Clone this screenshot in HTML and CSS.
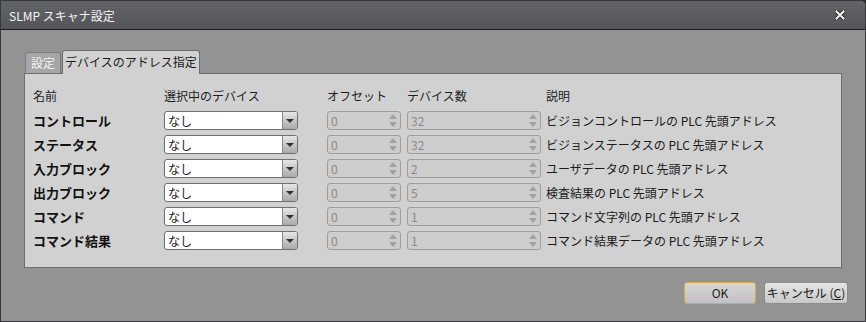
FILE: index.html
```html
<!DOCTYPE html>
<html lang="ja">
<head>
  <meta charset="UTF-8" />
  <title>SLMP スキャナ設定</title>
  <link rel="stylesheet" href="styles.css">
</head>
<body>
  <div class="window">
    <div class="titlebar">
      <span class="title">SLMP スキャナ設定</span>
      <svg class="close" width="10" height="10" viewBox="0 0 10 10">
        <path d="M1.5 1.5 L8.5 8.5 M8.5 1.5 L1.5 8.5" stroke="#2a2a2a" stroke-width="4" stroke-linecap="square"/>
        <path d="M1.5 1.5 L8.5 8.5 M8.5 1.5 L1.5 8.5" stroke="#f2f2f2" stroke-width="2" stroke-linecap="square"/>
      </svg>
    </div>

    <div class="dialog-body">
      <div class="tabs">
        <div class="tab">設定</div>
        <div class="tab active">デバイスのアドレス指定</div>
      </div>

      <div class="panel">
        <div class="grid">
          <div class="head">名前</div>
          <div class="head">選択中のデバイス</div>
          <div class="head">オフセット</div>
          <div class="head">デバイス数</div>
          <div class="head">説明</div>

          <div class="name">コントロール</div>
          <div><div class="combo"><span>なし</span><i class="drop"></i></div></div>
          <div><div class="spin small"><span>0</span><i class="arrows"></i></div></div>
          <div><div class="spin"><span>32</span><i class="arrows"></i></div></div>
          <div class="desc">ビジョンコントロールの PLC 先頭アドレス</div>

          <div class="name">ステータス</div>
          <div><div class="combo"><span>なし</span><i class="drop"></i></div></div>
          <div><div class="spin small"><span>0</span><i class="arrows"></i></div></div>
          <div><div class="spin"><span>32</span><i class="arrows"></i></div></div>
          <div class="desc">ビジョンステータスの PLC 先頭アドレス</div>

          <div class="name">入力ブロック</div>
          <div><div class="combo"><span>なし</span><i class="drop"></i></div></div>
          <div><div class="spin small"><span>0</span><i class="arrows"></i></div></div>
          <div><div class="spin"><span>2</span><i class="arrows"></i></div></div>
          <div class="desc">ユーザデータの PLC 先頭アドレス</div>

          <div class="name">出力ブロック</div>
          <div><div class="combo"><span>なし</span><i class="drop"></i></div></div>
          <div><div class="spin small"><span>0</span><i class="arrows"></i></div></div>
          <div><div class="spin"><span>5</span><i class="arrows"></i></div></div>
          <div class="desc">検査結果の PLC 先頭アドレス</div>

          <div class="name">コマンド</div>
          <div><div class="combo"><span>なし</span><i class="drop"></i></div></div>
          <div><div class="spin small"><span>0</span><i class="arrows"></i></div></div>
          <div><div class="spin"><span>1</span><i class="arrows"></i></div></div>
          <div class="desc">コマンド文字列の PLC 先頭アドレス</div>

          <div class="name">コマンド結果</div>
          <div><div class="combo"><span>なし</span><i class="drop"></i></div></div>
          <div><div class="spin small"><span>0</span><i class="arrows"></i></div></div>
          <div><div class="spin"><span>1</span><i class="arrows"></i></div></div>
          <div class="desc">コマンド結果データの PLC 先頭アドレス</div>
        </div>
      </div>

      <div class="footer">
        <button class="btn ok">OK</button>
        <button class="btn">キャンセル (<u>C</u>)</button>
      </div>
    </div>
  </div>
</body>
</html>
```

FILE: styles.css
```css
html, body {
  margin: 0;
  padding: 0;
  background: #2e2e30;
}

body {
  font-family: "Noto Sans CJK JP", "Noto Sans", sans-serif;
  font-size: 12px;
  color: #1a1a1a;
}

.window {
  width: 866px;
  height: 322px;
  box-sizing: border-box;
  border: 1px solid #38383c;
  border-top-right-radius: 6px;
  background: #939393;
  overflow: hidden;
  display: flex;
  flex-direction: column;
}

.titlebar {
  height: 28px;
  flex: none;
  background: linear-gradient(#626367, #55565a);
  border-bottom: 1px solid #1c1c1e;
  display: flex;
  align-items: center;
  justify-content: space-between;
  padding: 0 20px 0 8px;
}

.title {
  color: #f4f4f4;
  font-size: 12px;
}

.dialog-body {
  flex: 1;
  padding: 20px 23px 0 23px;
  display: flex;
  flex-direction: column;
}

.tabs {
  display: flex;
  align-items: flex-end;
  height: 23px;
  padding-left: 1px;
}

.tab {
  height: 21px;
  line-height: 20px;
  padding: 0 5px;
  box-sizing: border-box;
  background: #a6a6a6;
  color: #f2f2f2;
  border: 1px solid #7c7c7c;
  border-bottom: none;
  border-radius: 3px 3px 0 0;
}

.tab.active {
  height: 24px;
  line-height: 22px;
  padding: 0 2px;
  margin-left: 1px;
  margin-bottom: -1px;
  background: #d1d1d1;
  color: #1a1a1a;
  border-color: #6e6e6e;
  position: relative;
}

.panel {
  background: #d1d1d1;
  border: 1px solid #6e6e6e;
  height: 195px;
  box-sizing: border-box;
  padding: 12px 0 0 8px;
}

.grid {
  display: grid;
  grid-template-columns: 131px 163px 80px 139px 1fr;
  grid-template-rows: 20px;
  grid-auto-rows: 19px;
  row-gap: 5px;
}

.head {
  color: #1e1e1e;
  line-height: 20px;
  margin-bottom: -2px;
}

.name {
  font-weight: bold;
  font-size: 13px;
  line-height: 19px;
  color: #111;
}

.desc {
  line-height: 19px;
  color: #1a1a1a;
}

.combo {
  width: 134px;
  height: 19px;
  box-sizing: border-box;
  border: 1px solid #6f6f6f;
  border-radius: 3px;
  background: #fff;
  display: flex;
  align-items: center;
  justify-content: space-between;
  overflow: hidden;
}

.combo span {
  padding-left: 3px;
  line-height: 17px;
}

.drop {
  width: 14px;
  height: 17px;
  border-left: 1px solid #8a8a8a;
  background: linear-gradient(#e6e6e6, #a9a9a9);
  position: relative;
}

.drop::after {
  content: "";
  position: absolute;
  left: 3px;
  top: 7px;
  border-left: 4px solid transparent;
  border-right: 4px solid transparent;
  border-top: 4px solid #333;
}

.spin {
  width: 134px;
  height: 19px;
  box-sizing: border-box;
  border: 1px solid #9d9d9d;
  border-radius: 3px;
  background: #cdcdcd;
  color: #8a8a8a;
  display: flex;
  align-items: center;
  justify-content: space-between;
}

.spin.small {
  width: 74px;
}

.spin span {
  padding-left: 3px;
  line-height: 17px;
}

.arrows {
  width: 8px;
  height: 15px;
  margin-right: 3px;
  position: relative;
}

.arrows::before,
.arrows::after {
  content: "";
  position: absolute;
  left: 0;
  border-left: 4px solid transparent;
  border-right: 4px solid transparent;
}

.arrows::before {
  top: 1px;
  border-bottom: 5px solid #a2a2a2;
}

.arrows::after {
  bottom: 1px;
  border-top: 5px solid #a2a2a2;
}

.footer {
  display: flex;
  justify-content: flex-end;
  gap: 8px;
  margin-top: 14px;
  margin-right: -6px;
}

.btn {
  height: 22px;
  box-sizing: border-box;
  font-family: inherit;
  font-size: 12px;
  color: #1a1a1a;
  background: linear-gradient(#e4e4e4, #c8c8c8);
  border: 1px solid #8c8c8c;
  border-radius: 3px;
  padding: 0;
  line-height: 20px;
}

.btn.ok {
  width: 72px;
  border-color: #d9ad45;
  background: linear-gradient(#d6d6d6, #c2c2c2);
}

.btn:not(.ok) {
  width: 84px;
}

.btn u {
  text-decoration: underline;
}
```
